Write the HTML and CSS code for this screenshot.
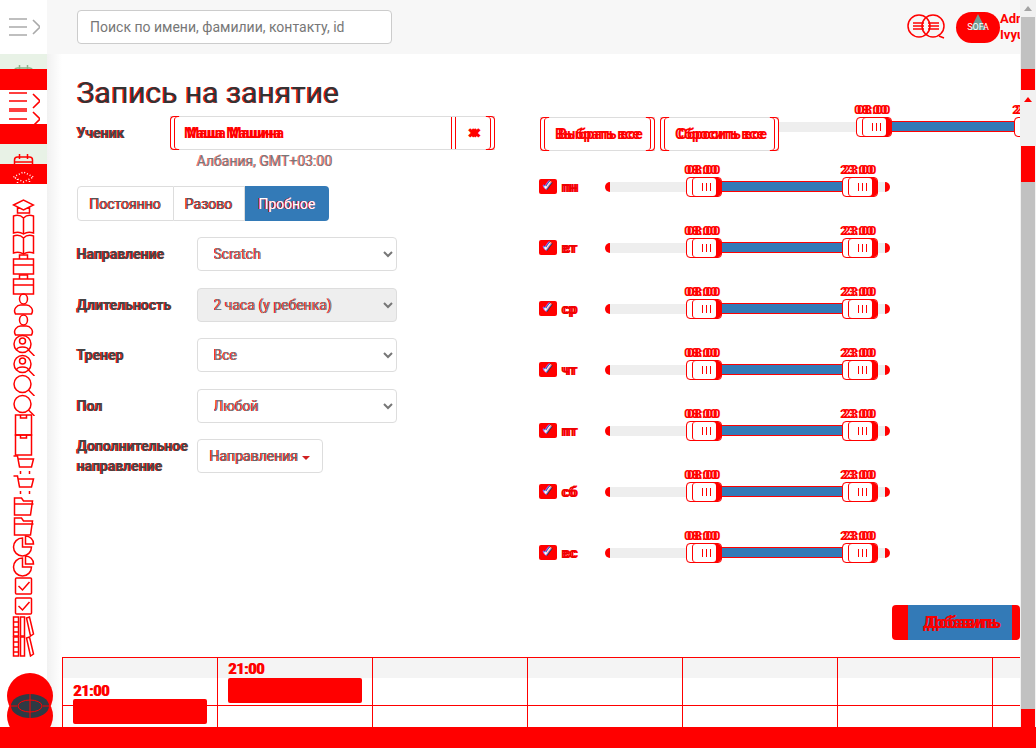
FILE: index.html
```html
<!DOCTYPE html>
<html lang="ru">
<head>
    <meta charset="UTF-8">
    <title>Запись на занятие</title>
    <link rel="stylesheet" href="styles.css">
</head>
<body>
    <svg class="sprite" width="0" height="0">
        <symbol id="i-menu" viewBox="0 0 32 22"><path d="M1 3h18M1 11h18M1 19h18M25 4l7 7-7 7"/></symbol>
        <symbol id="i-cal" viewBox="0 0 22 22"><rect x="2" y="5" width="18" height="15" rx="3"/><path d="M2 10h18M7 2v5M15 2v5M6 14h3M13 14h3"/></symbol>
        <symbol id="i-hat" viewBox="0 0 22 22"><path d="M1 9l10-5 10 5-10 5zM5 11v6h12v-6"/></symbol>
        <symbol id="i-book" viewBox="0 0 22 22"><path d="M11 5C8 2 4 2 1 3v17c3-1 7-1 10 1 3-2 7-2 10-1V3c-3-1-7-1-10 2zM11 5v16"/></symbol>
        <symbol id="i-case" viewBox="0 0 22 22"><rect x="1" y="6" width="20" height="15"/><path d="M7 6V2h8v4M1 12h20"/></symbol>
        <symbol id="i-person" viewBox="0 0 22 22"><ellipse cx="11" cy="6" rx="4" ry="5"/><path d="M3 21c-3-5 2-9 5-9h6c3 0 8 4 5 9z"/></symbol>
        <symbol id="i-usearch" viewBox="0 0 22 22"><circle cx="10" cy="10" r="8.5"/><circle cx="10" cy="7" r="3"/><path d="M4 16c1-4 11-4 12 0M16 16l6 6"/></symbol>
        <symbol id="i-search" viewBox="0 0 22 22"><circle cx="10" cy="10" r="8.5"/><path d="M16 16l6 6"/></symbol>
        <symbol id="i-doc" viewBox="0 0 22 22"><rect x="3" y="1" width="16" height="20"/><path d="M8 1v3h6V1"/></symbol>
        <symbol id="i-cart" viewBox="0 0 22 22"><path d="M1 2h4l2 11h12l2-8H6M8 17v3M17 17v3"/></symbol>
        <symbol id="i-folder" viewBox="0 0 22 22"><path d="M2 20V3h7l2 3h9l-2 14z"/><path d="M2 9h19"/></symbol>
        <symbol id="i-pie" viewBox="0 0 22 22"><path d="M10 3a9 9 0 1 0 9 9h-9zM13 1v8h8a8 8 0 0 0-8-8z"/></symbol>
        <symbol id="i-check" viewBox="0 0 22 22"><rect x="3" y="3" width="16" height="16" rx="1"/><path d="M6 11l4 4 7-8"/></symbol>
        <symbol id="i-lib" viewBox="0 0 22 22"><path d="M1 2h5v19H1zM1 7h5M1 12h5M1 17h5M8 2h4v19H8zM14 3l3-1 4 17-3 2z"/></symbol>
    </svg>

    <div class="page">
        <aside class="sidebar">
            <div class="side-top"><svg class="menu-icon grey"><use href="#i-menu"/></svg></div>
            <div class="band green band-first"><svg class="side-icon green-icon"><use href="#i-cal"/></svg></div>
            <div class="band red-band red-tall"></div>
            <div class="band stack">
                <svg class="menu-icon"><use href="#i-menu"/></svg>
                <svg class="menu-icon"><use href="#i-menu"/></svg>
            </div>
            <div class="band red-band"></div>
            <div class="band green band-second"><svg class="side-icon"><use href="#i-cal"/></svg></div>
            <div class="band red-band"><svg class="side-icon dotted"><use href="#i-hat"/></svg></div>
            <div class="side-list">
                <svg class="side-icon"><use href="#i-hat"/></svg>
                <svg class="side-icon"><use href="#i-book"/></svg>
                <svg class="side-icon"><use href="#i-book"/></svg>
                <svg class="side-icon"><use href="#i-case"/></svg>
                <svg class="side-icon"><use href="#i-case"/></svg>
                <svg class="side-icon"><use href="#i-person"/></svg>
                <svg class="side-icon"><use href="#i-person"/></svg>
                <svg class="side-icon"><use href="#i-usearch"/></svg>
                <svg class="side-icon"><use href="#i-usearch"/></svg>
                <svg class="side-icon"><use href="#i-search"/></svg>
                <svg class="side-icon"><use href="#i-search"/></svg>
                <svg class="side-icon"><use href="#i-doc"/></svg>
                <svg class="side-icon"><use href="#i-doc"/></svg>
                <svg class="side-icon"><use href="#i-cart"/></svg>
                <svg class="side-icon"><use href="#i-cart"/></svg>
                <svg class="side-icon"><use href="#i-folder"/></svg>
                <svg class="side-icon"><use href="#i-folder"/></svg>
                <svg class="side-icon"><use href="#i-pie"/></svg>
                <svg class="side-icon"><use href="#i-pie"/></svg>
                <svg class="side-icon"><use href="#i-check"/></svg>
                <svg class="side-icon"><use href="#i-check"/></svg>
                <svg class="side-icon"><use href="#i-lib"/></svg>
                <svg class="side-icon"><use href="#i-lib"/></svg>
            </div>
            <svg class="side-logo" viewBox="0 0 47 54">
                <circle cx="23" cy="23" r="23" fill="#f00"/>
                <circle cx="23" cy="43" r="23" fill="#f00"/>
                <ellipse cx="23" cy="33" rx="19" ry="12" fill="#2f3a44"/>
                <ellipse cx="23" cy="33" rx="12" ry="6" fill="none" stroke="#f00"/>
                <path d="M23 21v24M4 33h6M36 33h6" stroke="#f00"/>
            </svg>
        </aside>

        <div class="workspace">
            <header class="topbar">
                <input class="search" type="text" placeholder="Поиск по имени, фамилии, контакту, id">
                <div class="top-right">
                    <svg class="chat-icon" viewBox="0 0 38 26">
                        <circle cx="12" cy="12" r="11"/>
                        <circle cx="26" cy="12" r="11"/>
                        <path d="M6 9h11M6 12h11M6 15h11M21 9h11M21 12h11M21 15h11M32 22l5 2"/>
                    </svg>
                    <div class="avatar"><span class="avatar-peak"></span><span class="avatar-text">SOFA</span></div>
                    <div class="user-name">Admin<br>Ivyug</div>
                </div>
            </header>

            <main class="content">
                <h1 class="title">Запись на занятие</h1>
                <div class="columns">
                    <section class="form-col">
                        <div class="student-row">
                            <label class="form-label student-label">Ученик</label>
                            <div class="student-box bracket">
                                <span class="student-name">Маша Машина</span>
                                <span class="student-clear">✖</span>
                            </div>
                        </div>
                        <div class="student-tz">Албания, GMT+03:00</div>
                        <div class="tabs">
                            <span class="tab">Постоянно</span>
                            <span class="tab">Разово</span>
                            <span class="tab active">Пробное</span>
                        </div>
                        <div class="form-row">
                            <label class="form-label">Направление</label>
                            <select class="form-select"><option>Scratch</option></select>
                        </div>
                        <div class="form-row">
                            <label class="form-label">Длительность</label>
                            <select class="form-select" disabled><option>2 часа (у ребенка)</option></select>
                        </div>
                        <div class="form-row">
                            <label class="form-label">Тренер</label>
                            <select class="form-select"><option>Все</option></select>
                        </div>
                        <div class="form-row">
                            <label class="form-label">Пол</label>
                            <select class="form-select"><option>Любой</option></select>
                        </div>
                        <div class="form-row">
                            <label class="form-label">Дополнительное направление</label>
                            <button class="drop-btn">Направления<span class="caret"></span></button>
                        </div>
                    </section>

                    <section class="slots-col">
                        <div class="slots-head">
                            <button class="plain-btn bracket">Выбрать все</button>
                            <button class="plain-btn bracket">Сбросить все</button>
                            <div class="slider head-slider">
                                <span class="rail first-rail"></span>
                                <span class="handle"><span class="handle-label">08:00</span></span>
                                <span class="range"></span>
                                <span class="handle"><span class="handle-label">23:00</span></span>
                            </div>
                        </div>

                        <div class="day-row">
                            <label class="day-label"><input type="checkbox" checked>пн</label>
                            <div class="slider">
                                <span class="cap"></span><span class="rail"></span>
                                <span class="handle"><span class="handle-label">08:00</span></span>
                                <span class="range"></span>
                                <span class="handle"><span class="handle-label">23:00</span></span>
                                <span class="rail tail"></span><span class="cap"></span>
                            </div>
                        </div>
                        <div class="day-row">
                            <label class="day-label"><input type="checkbox" checked>вт</label>
                            <div class="slider">
                                <span class="cap"></span><span class="rail"></span>
                                <span class="handle"><span class="handle-label">08:00</span></span>
                                <span class="range"></span>
                                <span class="handle"><span class="handle-label">23:00</span></span>
                                <span class="rail tail"></span><span class="cap"></span>
                            </div>
                        </div>
                        <div class="day-row">
                            <label class="day-label"><input type="checkbox" checked>ср</label>
                            <div class="slider">
                                <span class="cap"></span><span class="rail"></span>
                                <span class="handle"><span class="handle-label">08:00</span></span>
                                <span class="range"></span>
                                <span class="handle"><span class="handle-label">23:00</span></span>
                                <span class="rail tail"></span><span class="cap"></span>
                            </div>
                        </div>
                        <div class="day-row">
                            <label class="day-label"><input type="checkbox" checked>чт</label>
                            <div class="slider">
                                <span class="cap"></span><span class="rail"></span>
                                <span class="handle"><span class="handle-label">08:00</span></span>
                                <span class="range"></span>
                                <span class="handle"><span class="handle-label">23:00</span></span>
                                <span class="rail tail"></span><span class="cap"></span>
                            </div>
                        </div>
                        <div class="day-row">
                            <label class="day-label"><input type="checkbox" checked>пт</label>
                            <div class="slider">
                                <span class="cap"></span><span class="rail"></span>
                                <span class="handle"><span class="handle-label">08:00</span></span>
                                <span class="range"></span>
                                <span class="handle"><span class="handle-label">23:00</span></span>
                                <span class="rail tail"></span><span class="cap"></span>
                            </div>
                        </div>
                        <div class="day-row">
                            <label class="day-label"><input type="checkbox" checked>сб</label>
                            <div class="slider">
                                <span class="cap"></span><span class="rail"></span>
                                <span class="handle"><span class="handle-label">08:00</span></span>
                                <span class="range"></span>
                                <span class="handle"><span class="handle-label">23:00</span></span>
                                <span class="rail tail"></span><span class="cap"></span>
                            </div>
                        </div>
                        <div class="day-row">
                            <label class="day-label"><input type="checkbox" checked>вс</label>
                            <div class="slider">
                                <span class="cap"></span><span class="rail"></span>
                                <span class="handle"><span class="handle-label">08:00</span></span>
                                <span class="range"></span>
                                <span class="handle"><span class="handle-label">23:00</span></span>
                                <span class="rail tail"></span><span class="cap"></span>
                            </div>
                        </div>
                        <div class="actions"><button class="add-btn">Добавить</button></div>
                    </section>
                </div>

                <div class="timetable">
                    <div class="tt-col"><span class="tt-time low">21:00</span><span class="tt-event low"></span></div>
                    <div class="tt-col"><span class="tt-time">21:00</span><span class="tt-event"></span></div>
                    <div class="tt-col"></div>
                    <div class="tt-col"></div>
                    <div class="tt-col"></div>
                    <div class="tt-col"></div>
                    <div class="tt-col"></div>
                </div>
            </main>
        </div>

        <div class="scrollbar">
            <span class="sb-arrow"></span>
            <span class="sb-thumb sb-top"></span>
            <span class="sb-red sb-top-red"></span>
            <span class="sb-arrow red-arrow"></span>
            <span class="sb-gap"></span>
            <span class="sb-red sb-mid-red"></span>
            <span class="sb-thumb sb-rest"></span>
            <span class="sb-red sb-end-red"></span>
        </div>
        <div class="bottom-bar"></div>
    </div>
</body>
</html>
```

FILE: styles.css
```css
* {
    box-sizing: border-box;
}
body {
    margin: 0;
    font-family: 'Roboto', 'Liberation Sans', sans-serif;
    font-size: 14px;
    color: #555;
    background: #fff;
    overflow: hidden;
}
.sprite {
    position: absolute;
}
.page {
    display: grid;
    grid-template-columns: 47px 973px 16px;
    grid-template-rows: 727px 21px;
    width: 1036px;
    height: 748px;
    overflow: hidden;
}

/* sidebar */
.sidebar {
    position: relative;
    z-index: 1;
    display: flex;
    flex-direction: column;
    background: #fff;
}
.side-top {
    flex: none;
    height: 54px;
    padding: 16px 0 0 8px;
}
.band {
    flex: none;
    overflow: hidden;
}
.band.green {
    background: #e8f2e6;
}
.band-first {
    height: 15px;
    padding: 9px 0 0 12px;
}
.band-second {
    height: 20px;
    padding: 8px 0 0 12px;
}
.red-band {
    height: 20px;
    background: #f00;
    padding-left: 12px;
}
.red-tall {
    height: 21px;
}
.stack {
    height: 34px;
    padding-left: 8px;
}
.menu-icon {
    display: block;
    width: 32px;
    height: 22px;
    margin-bottom: -4px;
    fill: none;
    stroke: #f00;
    stroke-width: 1.6;
}
.menu-icon.grey {
    stroke: #aaa;
}
.side-list {
    flex: none;
    padding: 12px 0 0 12px;
}
.side-icon {
    display: block;
    width: 23px;
    height: 22px;
    margin-bottom: -1.9px;
    fill: none;
    stroke: #f00;
    stroke-width: 1.5;
}
.side-list .side-icon:first-child {
    margin-bottom: -5px;
}
.green-icon {
    stroke: #8db48a;
}
.dotted {
    margin-top: 4px;
    stroke: #fff;
    stroke-dasharray: 1 2;
}
.side-logo {
    flex: none;
    width: 47px;
    height: 54px;
    margin-top: auto;
    margin-left: 7px;
}

/* top bar */
.workspace {
    display: flex;
    flex-direction: column;
    min-width: 0;
    overflow: hidden;
}
.topbar {
    display: flex;
    align-items: center;
    justify-content: space-between;
    height: 54px;
    flex: none;
    padding-left: 30px;
    background: #f7f7f7;
}
.search {
    width: 315px;
    height: 34px;
    padding: 0 12px;
    border: 1px solid #ccc;
    border-radius: 4px;
    background: #fff;
    font: 14px 'Roboto', sans-serif;
}
.search::placeholder {
    color: #777;
}
.top-right {
    display: flex;
    align-items: center;
    height: 100%;
    overflow: hidden;
}
.chat-icon {
    width: 38px;
    height: 26px;
    fill: none;
    stroke: #f00;
    stroke-width: 1.5;
}
.avatar {
    position: relative;
    width: 44px;
    height: 31px;
    margin-left: 11px;
    border-radius: 16px;
    background: #f00;
    overflow: hidden;
    text-align: center;
}
.avatar-peak {
    position: absolute;
    left: 14px;
    top: 2px;
    border: 8px solid transparent;
    border-top: 0;
    border-bottom: 16px solid #6f9c94;
}
.avatar-text {
    position: relative;
    font-size: 9px;
    line-height: 31px;
    color: #fff;
}
.user-name {
    width: 20px;
    font-size: 13px;
    font-weight: 700;
    line-height: 16px;
    color: #f00;
    white-space: nowrap;
}

/* main */
.content {
    flex: 1;
    display: flex;
    flex-direction: column;
    min-height: 0;
    padding-left: 15px;
    background: linear-gradient(to right, #f1f1f1, #fff 15px);
}
.title {
    flex: none;
    margin: 22px 0 0 15px;
    font-size: 30px;
    font-weight: 400;
    line-height: 33px;
    color: #333;
    text-shadow: -1px 0 0 #f00;
}
.columns {
    display: flex;
    flex: 1;
    min-height: 0;
}
.form-col {
    width: 476px;
    flex: none;
    padding-left: 15px;
}
.form-label {
    width: 120px;
    flex: none;
    font-weight: 700;
    line-height: 20px;
    color: #444;
    text-shadow: -1px 0 0 #f00;
}
.student-row {
    display: flex;
    align-items: center;
    margin-top: 7px;
}
.student-label {
    width: 93px;
}
.student-box {
    position: relative;
    display: flex;
    align-items: center;
    justify-content: space-between;
    width: 325px;
    height: 34px;
    border-top: 1px solid #ddd;
    border-bottom: 1px solid #ddd;
}
.student-name {
    padding-left: 14px;
    font-weight: 700;
    color: #f00;
    text-shadow: 3px 0 0 #f00;
}
.student-clear {
    display: flex;
    align-items: center;
    justify-content: center;
    width: 40px;
    height: 100%;
    padding-right: 5px;
    border-left: 1px solid #f00;
    box-shadow: -3px 0 0 #fff, -4px 0 0 #f00;
    font-size: 14px;
    color: #f00;
    text-shadow: 3px 0 0 #f00;
}
.bracket::before,
.bracket::after {
    content: "";
    position: absolute;
    top: -1px;
    bottom: -1px;
    width: 8px;
    border: 1px solid #f00;
}
.bracket::before {
    left: 0;
    border-right-color: #fff;
    border-radius: 4px 0 0 4px;
    box-shadow: inset 3px 0 0 #fff, inset 4px 0 0 #f00;
}
.bracket::after {
    right: 0;
    border-left-color: #fff;
    border-radius: 0 4px 4px 0;
    box-shadow: inset -3px 0 0 #fff, inset -4px 0 0 #f00;
}
.student-tz {
    margin: 1px 0 15px 120px;
    line-height: 20px;
    color: #777;
    text-shadow: -1px 0 0 rgba(255, 0, 0, 0.6);
}
.tabs {
    display: flex;
    height: 35px;
    margin-bottom: 16px;
}
.tab {
    display: flex;
    align-items: center;
    justify-content: center;
    width: 71px;
    border: 1px solid #ddd;
    color: #555;
    text-shadow: -1px 0 0 #f00;
}
.tab:first-child {
    width: 97px;
    border-radius: 4px 0 0 4px;
}
.tab + .tab {
    border-left: 0;
}
.tab.active {
    width: 84px;
    border: 0;
    border-radius: 0 4px 4px 0;
    background: #337ab7;
    color: #fff;
}
.form-row {
    display: flex;
    align-items: center;
    height: 34px;
    margin-bottom: 16.6px;
}
.form-select {
    width: 200px;
    height: 34px;
    padding: 6px 12px;
    border: 1px solid #ddd;
    border-radius: 4px;
    background: #fff;
    font: 14px 'Roboto', sans-serif;
    color: #777;
    text-shadow: -1px 0 0 #f00;
}
.form-select:disabled {
    background: #eee;
    opacity: 1;
}
.drop-btn {
    height: 34px;
    padding: 0 12px;
    border: 1px solid #ddd;
    border-radius: 4px;
    background: #fff;
    font: 14px 'Roboto', sans-serif;
    color: #666;
    text-shadow: -1px 0 0 #f00;
}
.caret {
    display: inline-block;
    margin-left: 3px;
    vertical-align: middle;
    border: 4px solid transparent;
    border-top-color: #d02020;
    border-bottom: 0;
}

/* right column */
.slots-col {
    flex: 1;
    min-width: 0;
    padding-left: 2px;
}
.slots-head {
    display: flex;
    align-items: center;
    height: 35px;
    margin-top: 7px;
}
.plain-btn {
    position: relative;
    flex: none;
    width: 115px;
    height: 34px;
    margin-right: 5px;
    border: 1px solid #ddd;
    border-left: 0;
    border-right: 0;
    background: #fff;
    font: 700 14px 'Roboto', sans-serif;
    color: #f00;
    text-shadow: 3px 0 0 #f00;
}
.plain-btn + .plain-btn {
    width: 119px;
    margin-right: 0;
}
.head-slider {
    flex: 1;
    min-width: 0;
    margin-top: -14px;
}
.first-rail {
    flex: none;
    width: 77px;
}
.head-slider .range {
    flex: none;
    width: 122px;
}
.day-row {
    display: flex;
    align-items: center;
    height: 61px;
    padding-top: 10px;
}
.day-label {
    display: flex;
    align-items: center;
    width: 65px;
    flex: none;
    font-weight: 700;
    color: #e00;
    text-shadow: 2px 0 0 #f00;
}
.day-label input {
    position: relative;
    appearance: none;
    width: 18px;
    height: 15px;
    margin: 0 4px 0 -1px;
    background: #f00;
    border-radius: 2px;
}
.day-label input::after {
    content: "✓";
    position: absolute;
    left: 3px;
    top: -2px;
    font-size: 14px;
    font-weight: 400;
    color: #fff;
    text-shadow: 1px 1px 0 #1e78e6, -1px -1px 0 #1e78e6;
}
.slider {
    display: flex;
    align-items: center;
    flex: 1;
    height: 20px;
    min-width: 0;
}
.day-row .slider {
    flex: none;
    width: 285px;
}
.cap {
    flex: none;
    width: 5px;
    height: 10px;
    background: #f00;
    border-radius: 5px 0 0 5px;
}
.cap:last-child {
    border-radius: 0 5px 5px 0;
}
.rail {
    flex: none;
    width: 76px;
    height: 10px;
    background: #eee;
}
.rail.tail {
    width: 7px;
}
.first-rail {
    width: 77px;
}
.range {
    flex: none;
    width: 120px;
    height: 11px;
    background: #337ab7;
    border-top: 1px solid #f00;
    border-bottom: 1px solid #f00;
}
.handle {
    position: relative;
    flex: none;
    width: 36px;
    height: 20px;
    border: 1px solid #f00;
    border-radius: 4px;
    background: #fff;
    box-shadow: inset 5px 0 0 #fff, inset 6px 0 0 #f00, inset -5px 0 0 #f00;
}
.handle::before {
    content: "";
    position: absolute;
    left: 15px;
    top: 5px;
    width: 9px;
    height: 8px;
    background: repeating-linear-gradient(to right, #f00 0 1px, #fff 1px 4px);
}
.handle-label {
    position: absolute;
    left: -3px;
    top: -15px;
    font-size: 13px;
    font-weight: 700;
    line-height: 14px;
    color: #f00;
    text-shadow: 3px 0 0 #f00;
    white-space: nowrap;
}
.actions {
    display: flex;
    justify-content: flex-end;
    margin-top: 27px;
}
.add-btn {
    width: 128px;
    height: 35px;
    padding: 0;
    border: 0;
    border-left: 16px solid #f00;
    border-right: 8px solid #f00;
    border-radius: 4px;
    background: #337ab7;
    font: 700 16px 'Roboto', sans-serif;
    color: #f00;
    text-shadow: 4px 0 0 #e00;
}

/* timetable */
.timetable {
    display: grid;
    grid-template-columns: repeat(6, 155px) 28px;
    height: 70px;
    flex: none;
    overflow: hidden;
    border-top: 1px solid #f00;
    background: linear-gradient(#f4f4f4 20px, #fff 20px);
}
.tt-col {
    position: relative;
    border-left: 1px solid #f00;
    background: linear-gradient(#f00, #f00) 0 47px / 100% 1px no-repeat;
}
.tt-time {
    position: absolute;
    left: 10px;
    top: 3px;
    font-weight: 700;
    color: #f00;
    text-shadow: 1px 0 0 #f00;
}
.tt-time.low {
    top: 25px;
}
.tt-event {
    position: absolute;
    left: 10px;
    top: 20px;
    width: 134px;
    height: 25px;
    background: #f00;
    border-radius: 2px;
}
.tt-event.low {
    top: 41px;
}

/* scrollbar */
.scrollbar {
    display: flex;
    flex-direction: column;
    align-items: center;
    background: #f1f1f1;
}
.scrollbar span {
    flex: none;
    width: 14px;
}
.sb-arrow {
    position: relative;
    height: 17px;
}
.sb-arrow::after {
    content: "";
    position: absolute;
    left: 3px;
    top: 6px;
    border: 4px solid transparent;
    border-top: 0;
    border-bottom: 5px solid #a3a3a3;
}
.red-arrow {
    margin-top: 1px;
}
.red-arrow::after {
    border-bottom-color: #f00;
}
.sb-thumb {
    background: #c1c1c1;
}
.scrollbar .sb-rest {
    flex: 1;
}
.sb-red {
    background: #f00;
}
.sb-top { height: 52px; }
.sb-top-red { height: 21px; }
.sb-gap { height: 38px; }
.sb-mid-red { height: 36px; }
.sb-end-red { height: 18px; }
.bottom-bar {
    grid-column: 1 / -1;
    position: relative;
    z-index: 2;
    background: #f00;
}
```
